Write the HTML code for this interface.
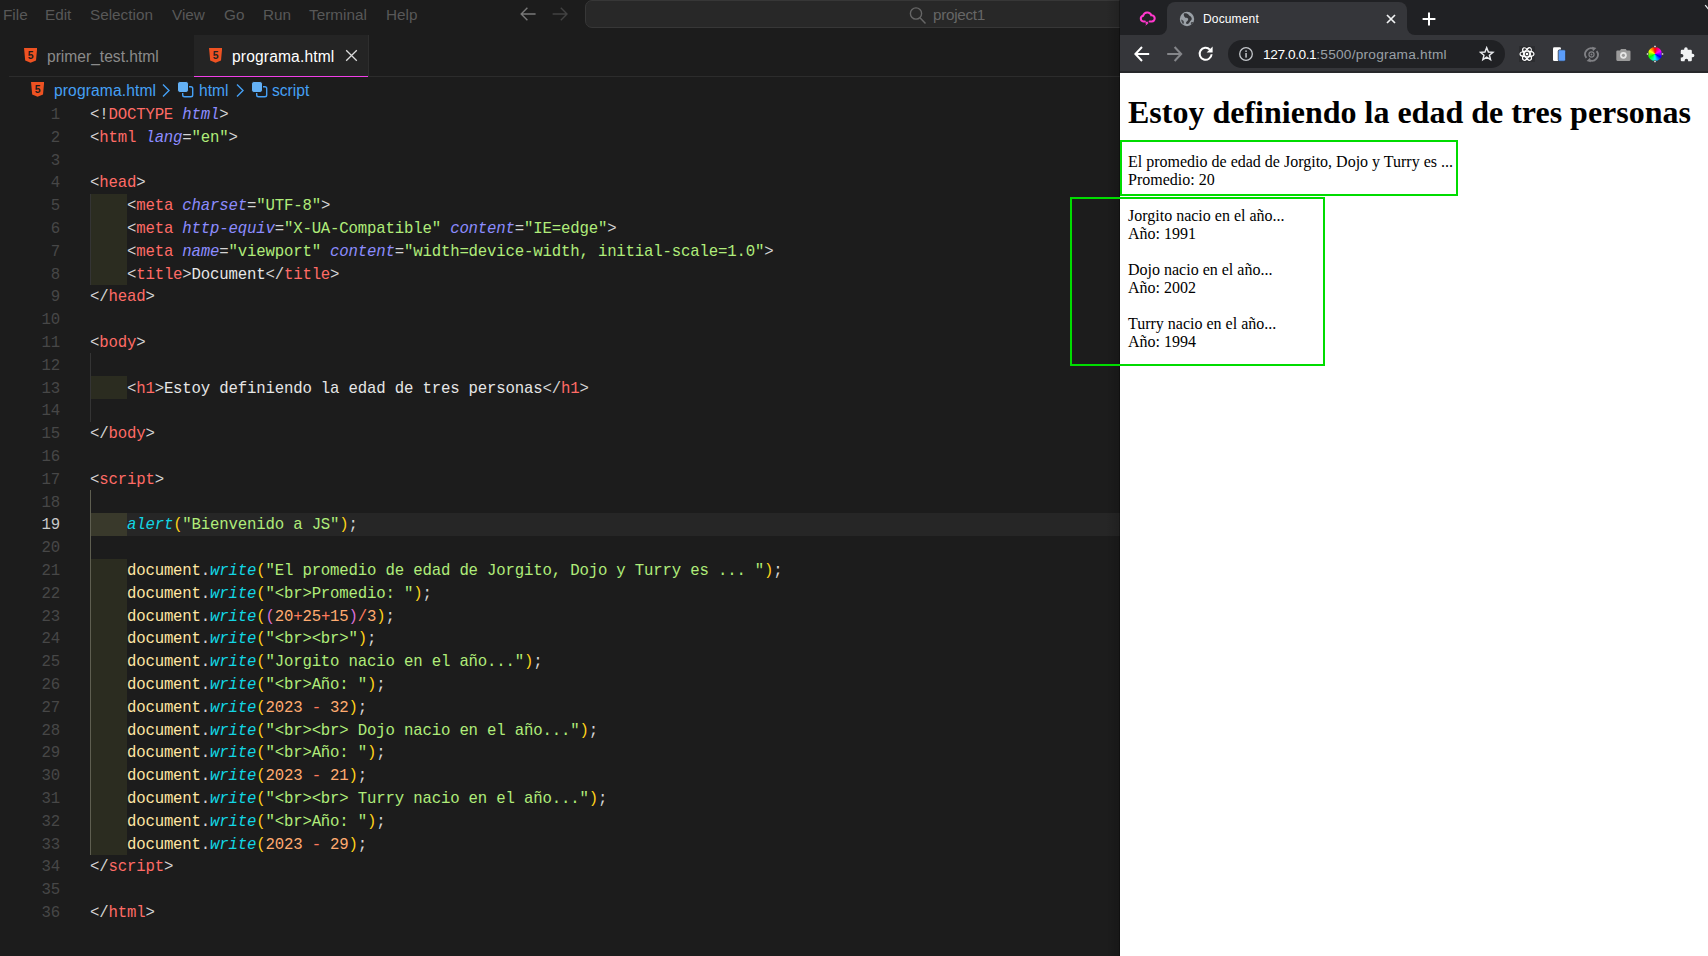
<!DOCTYPE html>
<html lang="es">
<head>
<meta charset="UTF-8">
<title>Document</title>
<style>
*{box-sizing:border-box;margin:0;padding:0}
html,body{width:1708px;height:956px;overflow:hidden;background:#1c1c1c}
body{position:relative;font-family:"Liberation Sans",sans-serif}
.abs{position:absolute}
/* ---------- VS Code ---------- */
#vsc{position:absolute;left:0;top:0;width:1120px;height:956px;background:#1c1c1c;overflow:hidden}
.menu{position:absolute;top:0;height:29px;line-height:29px;font-size:15.3px;color:#585858;white-space:nowrap}
#search{position:absolute;left:585px;top:0px;width:560px;height:28px;background:#282828;border:1px solid #373737;border-radius:7px}
#search span{position:absolute;left:347px;top:0;line-height:28px;font-size:15.3px;color:#666666;letter-spacing:-0.3px}
#tabline{position:absolute;left:9px;top:76px;width:1111px;height:1px;background:#2c2c2c}
#tab2{position:absolute;left:194px;top:35px;width:175px;height:42px;background:#242424;border-right:1px solid #2e2e2e}
#tab2:after{content:'';position:absolute;left:0;bottom:0;width:174px;height:1.4px;background:#f23fe8}
.tabtxt{position:absolute;top:36px;height:42px;line-height:42px;font-size:15.6px;white-space:nowrap}
.bc{position:absolute;top:78px;height:26px;line-height:26px;font-size:15.6px;color:#45a0f5;white-space:nowrap}
.ln{position:absolute;left:0;width:60px;height:22.8px;line-height:22.8px;text-align:right;font-family:"Liberation Mono",monospace;font-size:15.7px;letter-spacing:-0.18px;color:#474747}
.ln.cur{color:#c8c8c8}
.cl{position:absolute;height:22.8px;line-height:22.8px;font-family:"Liberation Mono",monospace;font-size:15.7px;letter-spacing:-0.18px;white-space:pre;color:#d4d4d4}
.curline{position:absolute;left:90px;width:1030px;height:22.8px;background:#262626}
.band{position:absolute;left:90px;width:37px;height:22.8px;background:#2b2c20}
.guide{position:absolute;left:90px;width:1px;background:#343434}
.guide.act{background:#5e5e50}
.band.cur{background:#39392b}
.p{color:#d4d4d4}.t{color:#ff6b66}.a{color:#8c8cff;font-style:italic}.s{color:#b0ec7a}
.f{color:#12d6e4;font-style:italic}.n{color:#ffab70}.o{color:#ff7a5c}.y{color:#ffd31a}.m{color:#da70d6}.x{color:#e6e6e6}.d{color:#ffe6a3}
/* ---------- Browser ---------- */
#br{position:absolute;left:1120px;top:0;width:588px;height:956px;background:#fff;overflow:hidden}
#strip{position:absolute;left:0;top:0;width:588px;height:35px;background:#202124}
#atab{position:absolute;left:47px;top:2px;width:240px;height:33px;background:#35363a;border-radius:8px 8px 0 0}
#toolbar{position:absolute;left:0;top:35px;width:588px;height:38px;background:#35363a;border-bottom:2px solid #27282b;z-index:2}
#pill{position:absolute;left:108px;top:5px;width:277px;height:28px;border-radius:14px;background:#202124}
#url{position:absolute;left:143px;top:1px;height:37px;line-height:37px;font-size:13.7px;color:#9aa0a6;white-space:nowrap}
#url b{font-weight:normal;color:#fff;letter-spacing:-0.42px}
#url span{letter-spacing:0.22px}
#page{position:absolute;left:0;top:72px;width:588px;height:884px;background:#fff;font-family:"Liberation Serif",serif;color:#000}
#page h1{position:absolute;left:8px;top:22px;font-size:32px;line-height:37px;font-weight:bold;white-space:nowrap}
#page p{position:absolute;left:8px;font-size:16px;line-height:18px;white-space:nowrap}
.gbox{position:absolute;border:2px solid #00dc00}
</style>
</head>
<body>
<div id="vsc">
  <div class="menu" style="left:3px">File</div>
  <div class="menu" style="left:45px">Edit</div>
  <div class="menu" style="left:90px">Selection</div>
  <div class="menu" style="left:172px">View</div>
  <div class="menu" style="left:224px">Go</div>
  <div class="menu" style="left:263px">Run</div>
  <div class="menu" style="left:309px">Terminal</div>
  <div class="menu" style="left:386px">Help</div>
  <svg class="abs" style="left:519px;top:6px" width="18" height="16" viewBox="0 0 18 16"><path d="M8.4 1.8 L2.2 8 L8.4 14.2 M2.4 8 H16.6" fill="none" stroke="#787878" stroke-width="1.4"/></svg>
  <svg class="abs" style="left:551px;top:6px" width="18" height="16" viewBox="0 0 18 16"><path d="M9.8 1.8 L16 8 L9.8 14.2 M15.8 8 H1.6" fill="none" stroke="#424242" stroke-width="1.4"/></svg>
  <div id="search">
    <svg class="abs" style="left:322px;top:5px" width="20" height="20" viewBox="0 0 20 20"><circle cx="8" cy="7.5" r="5.6" fill="none" stroke="#666666" stroke-width="1.4"/><path d="M12 11.8 L17.5 17.5" stroke="#666666" stroke-width="1.5" fill="none"/></svg>
    <span>project1</span>
  </div>
  <div id="tabline"></div>
  <div id="tab2"></div>
  <svg class="abs h5" style="left:24px;top:47.8px" width="13.2" height="14.8" viewBox="0 0 13.2 15.4" preserveAspectRatio="none"><path d="M0 0 H13.2 L12 13.1 L6.6 15.4 L1.2 13.1 Z" fill="#ee5222"/><text x="6.6" y="11.6" font-family="Liberation Sans,sans-serif" font-weight="bold" font-size="10.5" text-anchor="middle" fill="#1c1c1c">5</text></svg>
  <div class="tabtxt" style="left:47px;color:#8b8b8b">primer_test.html</div>
  <svg class="abs h5" style="left:209px;top:47.8px" width="13.2" height="14.8" viewBox="0 0 13.2 15.4" preserveAspectRatio="none"><path d="M0 0 H13.2 L12 13.1 L6.6 15.4 L1.2 13.1 Z" fill="#ee5222"/><text x="6.6" y="11.6" font-family="Liberation Sans,sans-serif" font-weight="bold" font-size="10.5" text-anchor="middle" fill="#242424">5</text></svg>
  <div class="tabtxt" style="left:232px;color:#ffffff;letter-spacing:0.15px">programa.html</div>
  <svg class="abs" style="left:345px;top:49px" width="13" height="13" viewBox="0 0 13 13"><path d="M1.2 1.2 L11.8 11.8 M11.8 1.2 L1.2 11.8" stroke="#dcdcdc" stroke-width="1.3" fill="none"/></svg>
  <!-- breadcrumbs -->
  <svg class="abs h5" style="left:30.8px;top:81.8px" width="13.2" height="14.8" viewBox="0 0 13.2 15.4" preserveAspectRatio="none"><path d="M0 0 H13.2 L12 13.1 L6.6 15.4 L1.2 13.1 Z" fill="#ee5222"/><text x="6.6" y="11.6" font-family="Liberation Sans,sans-serif" font-weight="bold" font-size="10.5" text-anchor="middle" fill="#1c1c1c">5</text></svg>
  <div class="bc" style="left:54px;letter-spacing:0.12px">programa.html</div>
  <svg class="abs" style="left:161px;top:83px" width="10" height="15" viewBox="0 0 10 15"><path d="M2 1.5 L8 7.5 L2 13.5" fill="none" stroke="#45a0f5" stroke-width="1.4"/></svg>
  <svg class="abs" style="left:177px;top:81px" width="17" height="17" viewBox="0 0 17 17"><rect x="5.7" y="5.7" width="10" height="10" rx="1.8" fill="none" stroke="#45a0f5" stroke-width="1.4"/><rect x="0.5" y="0.5" width="11" height="11" rx="2.4" fill="#64b1f5" stroke="#1c1c1c" stroke-width="1"/></svg>
  <div class="bc" style="left:199px">html</div>
  <svg class="abs" style="left:235px;top:83px" width="10" height="15" viewBox="0 0 10 15"><path d="M2 1.5 L8 7.5 L2 13.5" fill="none" stroke="#45a0f5" stroke-width="1.4"/></svg>
  <svg class="abs" style="left:250.5px;top:81px" width="17" height="17" viewBox="0 0 17 17"><rect x="5.7" y="5.7" width="10" height="10" rx="1.8" fill="none" stroke="#45a0f5" stroke-width="1.4"/><rect x="0.5" y="0.5" width="11" height="11" rx="2.4" fill="#64b1f5" stroke="#1c1c1c" stroke-width="1"/></svg>
  <div class="bc" style="left:272px">script</div>
<div class="ln" style="top:104.0px">1</div>
<div class="cl" style="top:104.0px;left:90.00px"><span class="p">&lt;!</span><span class="t">DOCTYPE</span><span class="p"> </span><span class="a">html</span><span class="p">&gt;</span></div>
<div class="ln" style="top:126.8px">2</div>
<div class="cl" style="top:126.8px;left:90.00px"><span class="p">&lt;</span><span class="t">html</span><span class="p"> </span><span class="a">lang</span><span class="p">=</span><span class="s">"en"</span><span class="p">&gt;</span></div>
<div class="ln" style="top:149.6px">3</div>
<div class="ln" style="top:172.4px">4</div>
<div class="cl" style="top:172.4px;left:90.00px"><span class="p">&lt;</span><span class="t">head</span><span class="p">&gt;</span></div>
<div class="ln" style="top:195.2px">5</div>
<div class="band" style="top:193.8px"></div>
<div class="cl" style="top:195.2px;left:126.96px"><span class="p">&lt;</span><span class="t">meta</span><span class="p"> </span><span class="a">charset</span><span class="p">=</span><span class="s">"UTF-8"</span><span class="p">&gt;</span></div>
<div class="ln" style="top:218.0px">6</div>
<div class="band" style="top:216.6px"></div>
<div class="cl" style="top:218.0px;left:126.96px"><span class="p">&lt;</span><span class="t">meta</span><span class="p"> </span><span class="a">http-equiv</span><span class="p">=</span><span class="s">"X-UA-Compatible"</span><span class="p"> </span><span class="a">content</span><span class="p">=</span><span class="s">"IE=edge"</span><span class="p">&gt;</span></div>
<div class="ln" style="top:240.8px">7</div>
<div class="band" style="top:239.4px"></div>
<div class="cl" style="top:240.8px;left:126.96px"><span class="p">&lt;</span><span class="t">meta</span><span class="p"> </span><span class="a">name</span><span class="p">=</span><span class="s">"viewport"</span><span class="p"> </span><span class="a">content</span><span class="p">=</span><span class="s">"width=device-width, initial-scale=1.0"</span><span class="p">&gt;</span></div>
<div class="ln" style="top:263.6px">8</div>
<div class="band" style="top:262.2px"></div>
<div class="cl" style="top:263.6px;left:126.96px"><span class="p">&lt;</span><span class="t">title</span><span class="p">&gt;</span><span class="x">Document</span><span class="p">&lt;/</span><span class="t">title</span><span class="p">&gt;</span></div>
<div class="ln" style="top:286.4px">9</div>
<div class="cl" style="top:286.4px;left:90.00px"><span class="p">&lt;/</span><span class="t">head</span><span class="p">&gt;</span></div>
<div class="ln" style="top:309.2px">10</div>
<div class="ln" style="top:332.0px">11</div>
<div class="cl" style="top:332.0px;left:90.00px"><span class="p">&lt;</span><span class="t">body</span><span class="p">&gt;</span></div>
<div class="ln" style="top:354.8px">12</div>
<div class="ln" style="top:377.6px">13</div>
<div class="band" style="top:376.2px"></div>
<div class="cl" style="top:377.6px;left:126.96px"><span class="p">&lt;</span><span class="t">h1</span><span class="p">&gt;</span><span class="x">Estoy definiendo la edad de tres personas</span><span class="p">&lt;/</span><span class="t">h1</span><span class="p">&gt;</span></div>
<div class="ln" style="top:400.4px">14</div>
<div class="ln" style="top:423.2px">15</div>
<div class="cl" style="top:423.2px;left:90.00px"><span class="p">&lt;/</span><span class="t">body</span><span class="p">&gt;</span></div>
<div class="ln" style="top:446.0px">16</div>
<div class="ln" style="top:468.8px">17</div>
<div class="cl" style="top:468.8px;left:90.00px"><span class="p">&lt;</span><span class="t">script</span><span class="p">&gt;</span></div>
<div class="ln" style="top:491.6px">18</div>
<div class="ln cur" style="top:514.4px">19</div>
<div class="curline" style="top:513.0px"></div>
<div class="band cur" style="top:513.0px"></div>
<div class="cl" style="top:514.4px;left:126.96px"><span class="f">alert</span><span class="y">(</span><span class="s">"Bienvenido a JS"</span><span class="y">)</span><span class="p">;</span></div>
<div class="ln" style="top:537.2px">20</div>
<div class="ln" style="top:560.0px">21</div>
<div class="band" style="top:558.6px"></div>
<div class="cl" style="top:560.0px;left:126.96px"><span class="d">document</span><span class="p">.</span><span class="f">write</span><span class="y">(</span><span class="s">"El promedio de edad de Jorgito, Dojo y Turry es ... "</span><span class="y">)</span><span class="p">;</span></div>
<div class="ln" style="top:582.8px">22</div>
<div class="band" style="top:581.4px"></div>
<div class="cl" style="top:582.8px;left:126.96px"><span class="d">document</span><span class="p">.</span><span class="f">write</span><span class="y">(</span><span class="s">"&lt;br&gt;Promedio: "</span><span class="y">)</span><span class="p">;</span></div>
<div class="ln" style="top:605.6px">23</div>
<div class="band" style="top:604.2px"></div>
<div class="cl" style="top:605.6px;left:126.96px"><span class="d">document</span><span class="p">.</span><span class="f">write</span><span class="y">(</span><span class="m">(</span><span class="n">20</span><span class="o">+</span><span class="n">25</span><span class="o">+</span><span class="n">15</span><span class="m">)</span><span class="o">/</span><span class="n">3</span><span class="y">)</span><span class="p">;</span></div>
<div class="ln" style="top:628.4px">24</div>
<div class="band" style="top:627.0px"></div>
<div class="cl" style="top:628.4px;left:126.96px"><span class="d">document</span><span class="p">.</span><span class="f">write</span><span class="y">(</span><span class="s">"&lt;br&gt;&lt;br&gt;"</span><span class="y">)</span><span class="p">;</span></div>
<div class="ln" style="top:651.2px">25</div>
<div class="band" style="top:649.8px"></div>
<div class="cl" style="top:651.2px;left:126.96px"><span class="d">document</span><span class="p">.</span><span class="f">write</span><span class="y">(</span><span class="s">"Jorgito nacio en el año..."</span><span class="y">)</span><span class="p">;</span></div>
<div class="ln" style="top:674.0px">26</div>
<div class="band" style="top:672.6px"></div>
<div class="cl" style="top:674.0px;left:126.96px"><span class="d">document</span><span class="p">.</span><span class="f">write</span><span class="y">(</span><span class="s">"&lt;br&gt;Año: "</span><span class="y">)</span><span class="p">;</span></div>
<div class="ln" style="top:696.8px">27</div>
<div class="band" style="top:695.4px"></div>
<div class="cl" style="top:696.8px;left:126.96px"><span class="d">document</span><span class="p">.</span><span class="f">write</span><span class="y">(</span><span class="n">2023</span><span class="p"> </span><span class="o">-</span><span class="p"> </span><span class="n">32</span><span class="y">)</span><span class="p">;</span></div>
<div class="ln" style="top:719.6px">28</div>
<div class="band" style="top:718.2px"></div>
<div class="cl" style="top:719.6px;left:126.96px"><span class="d">document</span><span class="p">.</span><span class="f">write</span><span class="y">(</span><span class="s">"&lt;br&gt;&lt;br&gt; Dojo nacio en el año..."</span><span class="y">)</span><span class="p">;</span></div>
<div class="ln" style="top:742.4px">29</div>
<div class="band" style="top:741.0px"></div>
<div class="cl" style="top:742.4px;left:126.96px"><span class="d">document</span><span class="p">.</span><span class="f">write</span><span class="y">(</span><span class="s">"&lt;br&gt;Año: "</span><span class="y">)</span><span class="p">;</span></div>
<div class="ln" style="top:765.2px">30</div>
<div class="band" style="top:763.8px"></div>
<div class="cl" style="top:765.2px;left:126.96px"><span class="d">document</span><span class="p">.</span><span class="f">write</span><span class="y">(</span><span class="n">2023</span><span class="p"> </span><span class="o">-</span><span class="p"> </span><span class="n">21</span><span class="y">)</span><span class="p">;</span></div>
<div class="ln" style="top:788.0px">31</div>
<div class="band" style="top:786.6px"></div>
<div class="cl" style="top:788.0px;left:126.96px"><span class="d">document</span><span class="p">.</span><span class="f">write</span><span class="y">(</span><span class="s">"&lt;br&gt;&lt;br&gt; Turry nacio en el año..."</span><span class="y">)</span><span class="p">;</span></div>
<div class="ln" style="top:810.8px">32</div>
<div class="band" style="top:809.4px"></div>
<div class="cl" style="top:810.8px;left:126.96px"><span class="d">document</span><span class="p">.</span><span class="f">write</span><span class="y">(</span><span class="s">"&lt;br&gt;Año: "</span><span class="y">)</span><span class="p">;</span></div>
<div class="ln" style="top:833.6px">33</div>
<div class="band" style="top:832.2px"></div>
<div class="cl" style="top:833.6px;left:126.96px"><span class="d">document</span><span class="p">.</span><span class="f">write</span><span class="y">(</span><span class="n">2023</span><span class="p"> </span><span class="o">-</span><span class="p"> </span><span class="n">29</span><span class="y">)</span><span class="p">;</span></div>
<div class="ln" style="top:856.4px">34</div>
<div class="cl" style="top:856.4px;left:90.00px"><span class="p">&lt;/</span><span class="t">script</span><span class="p">&gt;</span></div>
<div class="ln" style="top:879.2px">35</div>
<div class="ln" style="top:902.0px">36</div>
<div class="cl" style="top:902.0px;left:90.00px"><span class="p">&lt;/</span><span class="t">html</span><span class="p">&gt;</span></div>
<div class="guide" style="top:193.8px;height:91.2px"></div>
<div class="guide" style="top:353.4px;height:68.4px"></div>
<div class="guide act" style="top:490.2px;height:364.8px"></div>
  <div class="abs" style="left:1106px;top:0;width:14px;height:956px;background:linear-gradient(to right,rgba(0,0,0,0),rgba(0,0,0,0.16))"></div>
  <div class="abs" style="left:1119px;top:0;width:1px;height:956px;background:rgba(0,0,0,0.3)"></div>
</div>
<div id="br">
  <div id="strip">
    <div id="atab"></div>
    <div class="abs" style="left:39px;top:27px;width:8px;height:8px;background:#35363a"></div>
    <div class="abs" style="left:31px;top:19px;width:16px;height:16px;background:#202124;border-radius:0 0 8px 0"></div>
    <div class="abs" style="left:287px;top:27px;width:8px;height:8px;background:#35363a"></div>
    <div class="abs" style="left:287px;top:19px;width:16px;height:16px;background:#202124;border-radius:0 0 0 8px"></div>
    <!-- pinned cloud icon -->
    <svg class="abs" style="left:19.3px;top:11px" width="17" height="16" viewBox="0 0 18 17"><path d="M6.2 11.2 H4.6 A3.1 3.1 0 0 1 4.3 5.1 A4.6 4.6 0 0 1 13.1 4.6 A3.3 3.3 0 0 1 13.6 11.2 H11.4" fill="none" stroke="#ff38cc" stroke-width="2.2" stroke-linecap="round"/><path d="M7.2 11.3 H10.3 L9 13 L10.2 13 L6.6 15.8 L7.8 13.4 L6.6 13.4 Z" fill="#ff38cc"/></svg>
    <!-- globe -->
    <svg class="abs" style="left:59px;top:10.8px" width="16" height="16" viewBox="0 0 16 16"><circle cx="8" cy="8" r="7.2" fill="#9aa0a6"/><path d="M5 2.6 C6.4 1.9 8.6 2.4 9.6 3.8 C10.3 4.8 11.6 5.2 12.4 6.4 C13 7.4 12.8 8.8 11.8 9.6 C10.8 10.4 10.6 11.6 9.6 12.6 C8.8 13.4 7.2 13.2 7 12 C6.9 11 7.9 10.5 8.6 9.7 C9.3 8.9 9.5 7.9 8.7 7.3 C7.9 6.7 6.7 7.1 5.9 6.3 C5.1 5.5 4.3 3.5 5 2.6 Z" fill="#35363a"/><path d="M2.2 8.6 C3.2 8.8 4.4 9.4 4.8 10.6 C5.1 11.6 4.8 12.6 4.2 13.2 C3 12 2.2 10.4 2.2 8.6 Z M12.2 11.2 C12.9 10.9 13.7 11 14.2 11.4 C13.7 12.4 13 13.2 12.1 13.8 C11.8 12.9 11.7 11.8 12.2 11.2 Z" fill="#35363a" opacity="0.85"/></svg>
    <!-- tab close -->
    <svg class="abs" style="left:266px;top:14px" width="10" height="10" viewBox="0 0 10 10"><path d="M1 1 L9 9 M9 1 L1 9" stroke="#f1f3f4" stroke-width="1.7" fill="none"/></svg>
    <!-- new tab plus -->
    <svg class="abs" style="left:302px;top:12px" width="14" height="14" viewBox="0 0 14 14"><path d="M7 0.6 V13.4 M0.6 7 H13.4" stroke="#ffffff" stroke-width="2" fill="none"/></svg>
    <svg class="abs" style="left:580px;top:0px" width="8" height="12" viewBox="0 0 8 12"><path d="M5.2 5.2 L8.5 9.2" stroke="#e8eaed" stroke-width="1.3" fill="none"/></svg>
  </div>
  <div id="toolbar">
    <div id="pill"></div>
    <div id="url"><b>127.0.0.1</b><span>:5500/programa.html</span></div>
    <!-- back -->
    <svg class="abs" style="left:13px;top:11px" width="18" height="16" viewBox="0 0 18 16"><path d="M9 1 L2.4 8 L9 15 M2.6 8 H16.2" fill="none" stroke="#ffffff" stroke-width="2"/></svg>
    <!-- forward -->
    <svg class="abs" style="left:45px;top:11px" width="18" height="16" viewBox="0 0 18 16"><path d="M9.6 1 L16.2 8 L9.6 15 M16 8 H2.2" fill="none" stroke="#85868a" stroke-width="2"/></svg>
    <!-- reload -->
    <svg class="abs" style="left:77.4px;top:10px" width="18" height="18" viewBox="0 0 18 18"><path d="M14.6 9.2 A6 6 0 1 1 12.9 4.6" fill="none" stroke="#ffffff" stroke-width="2"/><path d="M15.6 1.6 V7.6 H9.6 Z" fill="#ffffff"/></svg>
    <!-- info -->
    <svg class="abs" style="left:117px;top:10px" width="18" height="18" viewBox="0 0 18 18"><circle cx="9" cy="9" r="6.3" fill="none" stroke="#c4c7cb" stroke-width="1.3"/><rect x="8.3" y="8" width="1.5" height="4.6" fill="#c4c7cb"/><rect x="8.3" y="5.4" width="1.5" height="1.5" fill="#c4c7cb"/></svg>
    <!-- star -->
    <svg class="abs" style="left:359.3px;top:11.2px" width="15.4" height="15.4" viewBox="0 0 18 18"><path d="M9 2 L11 7 L16.3 7.4 L12.2 10.8 L13.5 16 L9 13.1 L4.5 16 L5.8 10.8 L1.7 7.4 L7 7 Z" fill="none" stroke="#e8eaed" stroke-width="1.7" stroke-linejoin="miter"/></svg>
    <!-- react -->
    <svg class="abs" style="left:398px;top:10px" width="18" height="18" viewBox="0 0 18 18"><rect x="1" y="1" width="16" height="16" fill="#2c2d30"/><g fill="none" stroke="#ffffff" stroke-width="1.2"><ellipse cx="9" cy="9" rx="7" ry="2.8"/><ellipse cx="9" cy="9" rx="7" ry="2.8" transform="rotate(60 9 9)"/><ellipse cx="9" cy="9" rx="7" ry="2.8" transform="rotate(120 9 9)"/></g><circle cx="9" cy="9" r="1.3" fill="#ffffff"/></svg>
    <!-- files -->
    <svg class="abs" style="left:431px;top:10px" width="18" height="18" viewBox="0 0 18 18"><rect x="2" y="2.2" width="8" height="13.8" rx="1.3" fill="#ffffff"/><rect x="7.2" y="4.8" width="7.4" height="11.4" rx="1.4" fill="#5b9df9" stroke="#2a2b2e" stroke-width="0.7"/></svg>
    <!-- sync -->
    <svg class="abs" style="left:462.5px;top:10.6px" width="17" height="17" viewBox="0 0 18 18"><g fill="none" stroke="#808185" stroke-width="1.9"><path d="M3.6 12.6 A6.3 6.3 0 0 1 11.6 3.2"/><path d="M14.4 5.4 A6.3 6.3 0 0 1 6.4 14.8"/></g><circle cx="9" cy="9" r="2.7" fill="none" stroke="#808185" stroke-width="1.3"/><path d="M9.6 0.8 L14.2 2.2 L10.6 5.6 Z M8.4 17.2 L3.8 15.8 L7.4 12.4 Z" fill="#808185"/><circle cx="9" cy="9" r="1" fill="#808185"/></svg>
    <!-- camera -->
    <svg class="abs" style="left:494.8px;top:10.6px" width="16.8" height="16.8" viewBox="0 0 18 18"><path d="M6.4 3.2 H11.6 L12.6 4.8 H15.4 A1.2 1.2 0 0 1 16.6 6 V14.8 A1.2 1.2 0 0 1 15.4 16 H2.6 A1.2 1.2 0 0 1 1.4 14.8 V6 A1.2 1.2 0 0 1 2.6 4.8 H5.4 Z" fill="#9b9b9b"/><circle cx="9" cy="10" r="3.6" fill="#e6e6e6"/><circle cx="9" cy="10" r="1.7" fill="#9b9b9b"/></svg>
    <!-- color wheel -->
    <div class="abs" style="left:527.6px;top:11.6px;width:14.6px;height:14.6px;border-radius:50%;background:conic-gradient(from 0deg,#ff0000,#ff00ff,#0000ff,#00ffff,#00ff00,#ffff00,#ff0000)"></div>
    <svg class="abs" style="left:525.9px;top:9.9px" width="18" height="18" viewBox="0 0 18 18"><g fill="#ffffff" stroke="#35363a" stroke-width="0.6"><circle cx="9" cy="1.6" r="1.1"/><circle cx="9" cy="16.4" r="1.1"/><circle cx="1.6" cy="9" r="1.1"/><circle cx="16.4" cy="9" r="1.1"/></g></svg>
    <!-- puzzle -->
    <svg class="abs" style="left:558.6px;top:11.2px" width="16.8" height="16.6" viewBox="0 0 18 18"><path d="M7.4 1.4 A1.9 1.9 0 0 1 9.3 3.3 V4.2 H12.6 A1.2 1.2 0 0 1 13.8 5.4 V8.4 H14.7 A1.9 1.9 0 0 1 14.7 12.2 H13.8 V15.4 A1.2 1.2 0 0 1 12.6 16.6 H9.8 V15.6 A1.9 1.9 0 0 0 6 15.6 V16.6 H3 A1.2 1.2 0 0 1 1.8 15.4 V12.4 H2.8 A1.9 1.9 0 0 0 2.8 8.6 H1.8 V5.4 A1.2 1.2 0 0 1 3 4.2 H5.5 V3.3 A1.9 1.9 0 0 1 7.4 1.4 Z" fill="#f1f3f4"/></svg>
  </div>
  <div class="abs" style="left:83px;top:1px;height:37px;line-height:37px;font-size:12px;color:#ffffff;white-space:nowrap;letter-spacing:0.15px">Document</div>
  <div id="page">
    <h1>Estoy definiendo la edad de tres personas</h1>
    <p style="top:81px">El promedio de edad de Jorgito, Dojo y Turry es ...<br>Promedio: 20<br><br>Jorgito nacio en el año...<br>Año: 1991<br><br>Dojo nacio en el año...<br>Año: 2002<br><br>Turry nacio en el año...<br>Año: 1994</p>
  </div>
</div>
<div class="gbox" style="left:1120px;top:140px;width:338px;height:56px"></div>
<div class="gbox" style="left:1070px;top:197px;width:255px;height:169px"></div>
</body>
</html>
